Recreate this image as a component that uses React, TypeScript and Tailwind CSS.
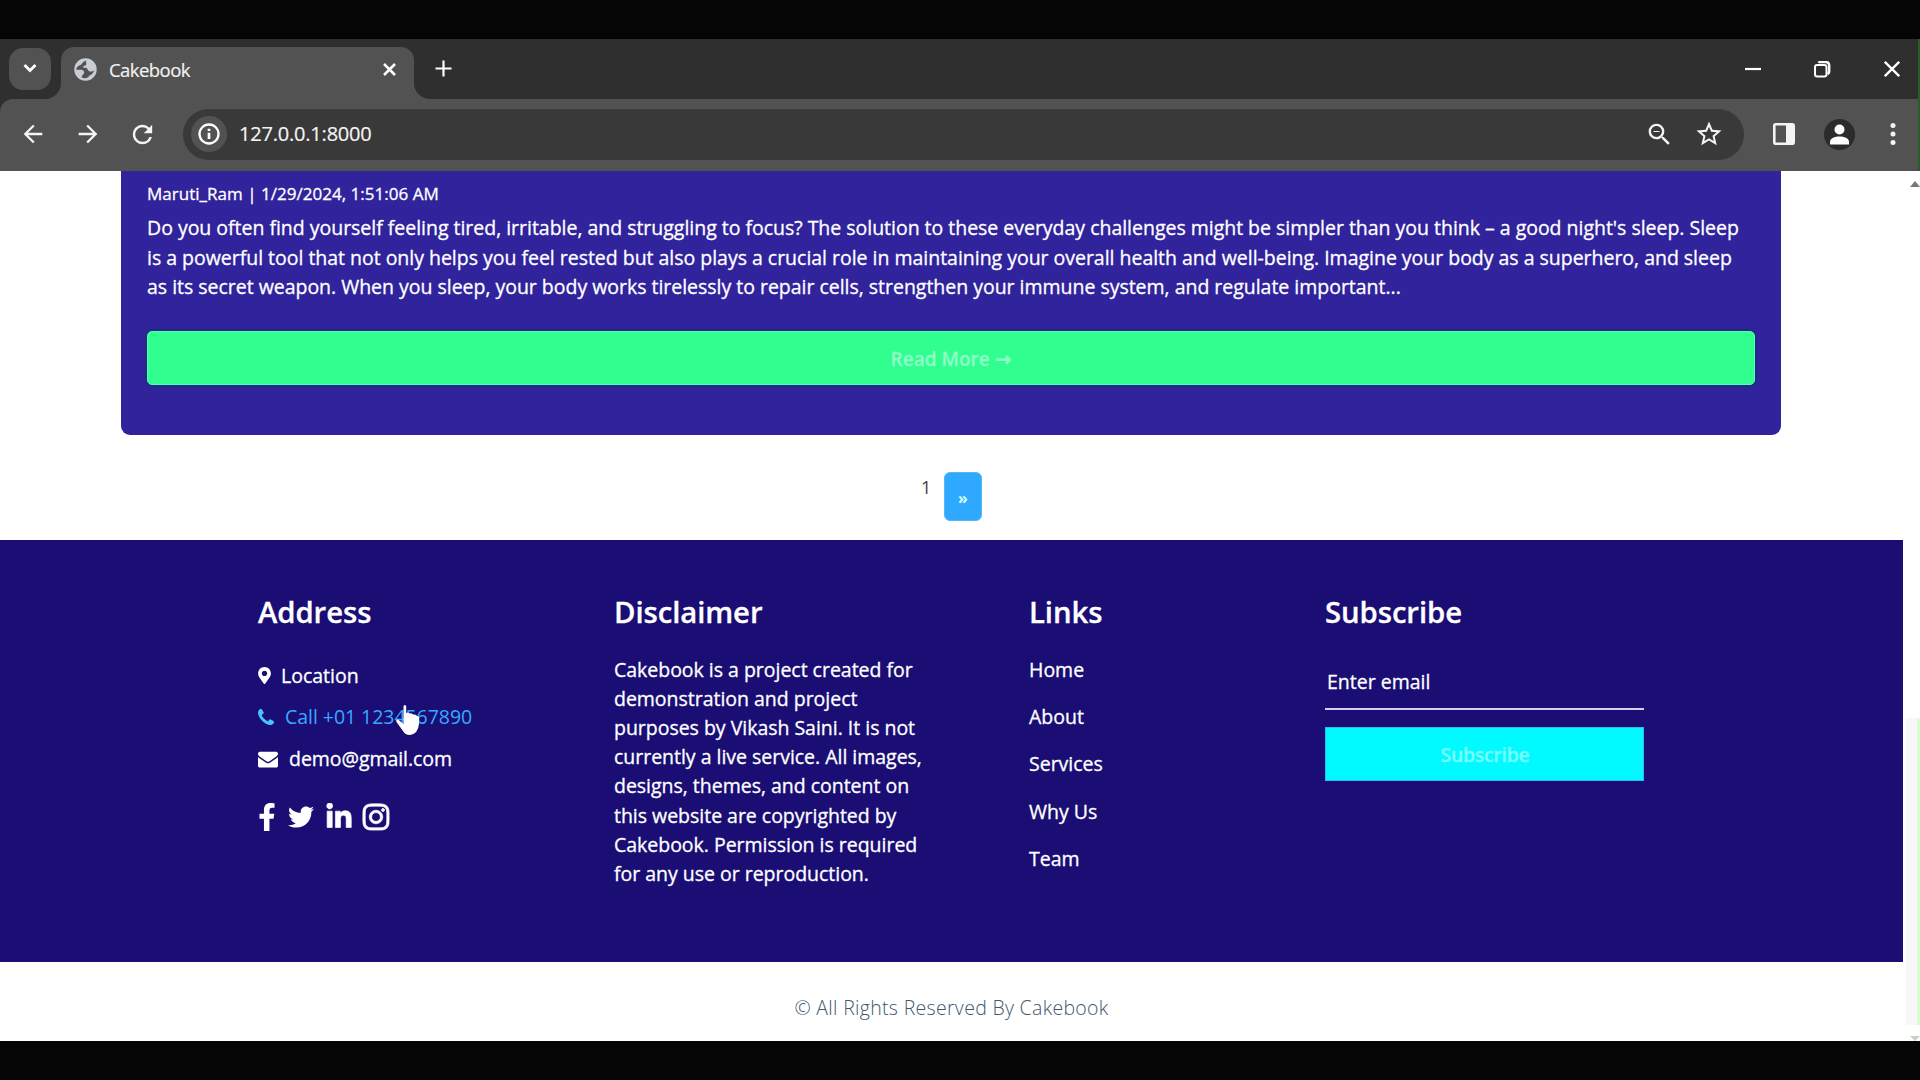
import React from "react";
import { FaMapMarkerAlt, FaFacebookF, FaTwitter, FaLinkedinIn, FaInstagram } from "react-icons/fa";
import { MdArrowBack, MdArrowForward, MdRefresh, MdStarBorder, MdZoomOut } from "react-icons/md";

const PHONE =
  "M1408 1112q0 27-10 70.5t-21 68.5q-21 50-122 106-94 51-186 51-27 0-53-3.5t-57-12.5-47-14.5-55.5-20.5-49.5-18q-98-35-175-83-127-79-264-216t-216-264q-48-77-83-175-3-9-18-49.5t-20.5-55.5-14.5-47-12.5-57-3.5-53q0-92 51-186 56-101 106-122 25-11 68.5-21t70.5-10q14 0 21 3 18 6 53 76 11 19 30 54t35 63.5 31 53.5q3 4 17.5 25t21.5 35.5 7 28.5q0 20-28.5 50t-62 55-62 53-28.5 46q0 9 5 22.5t8.5 20.5 14 24 11.5 19q76 137 174 235t235 174q2 1 19 11.5t24 14 20.5 8.5 22.5 5q18 0 46-28.5t53-62 55-62 50-28.5q14 0 28.5 7t35.5 21.5 25 17.5q25 15 53.5 31t63.5 35 54 30q70 35 76 53 3 7 3 21z";
const ENVELOPE =
  "M1792 710v794q0 66-47 113t-113 47h-1472q-66 0-113-47t-47-113v-794q44 49 101 87 362 246 497 345 57 42 92.5 65.5t94.5 48 110 24.5h2q51 0 110-24.5t94.5-48 92.5-65.5q170-123 498-345 57-39 100-87zm0-294q0 79-49 151t-122 123q-376 261-468 325-10 7-42.5 31t-54 38.5-52 32.5-57.5 27-50 9h-2q-23 0-50-9t-57.5-27-52-32.5-54-38.5-42.5-31q-91-64-262-182.5t-205-142.5q-62-42-117-115.5t-55-136.5q0-78 41.5-130t118.5-52h1472q65 0 112.5 47t47.5 113z";

function TabStrip() {
  return (
    <div className="flex h-[60px] shrink-0 bg-[#2f2f2f] pl-[9px]">
      <div className="mt-[9px] flex size-[42px] items-center justify-center rounded-[14px] bg-[#525252]">
        <svg width="14" height="10" viewBox="0 0 14 10" fill="none" stroke="#fff" strokeWidth="2.8">
          <path d="M1.5 1 7 6.5 12.5 1" />
        </svg>
      </div>
      <div className="relative ml-[10px] mt-2 flex h-[52px] w-[353px] items-center rounded-t-[13px] bg-[#525252] pb-2 pl-[13px] pr-[18px]">
        <svg className="absolute -left-4 bottom-0" width="16" height="16" fill="#525252">
          <path d="M16 0V16H0A16 16 0 0 0 16 0Z" />
        </svg>
        <svg className="absolute -right-4 bottom-0" width="16" height="16" fill="#525252">
          <path d="M0 0V16H16A16 16 0 0 1 0 0Z" />
        </svg>
        <svg width="23" height="23" viewBox="0 0 23 23" className="shrink-0">
          <circle cx="11.5" cy="11.5" r="11.2" fill="#c8ccd3" />
          <path
            d="M12.300 2.500C8.500 3.500 9 5.800 6 7.200C3.500 8.300 2.300 9.500 2.300 11.800H6.500C9.500 11.800 9.800 13.200 10.300 14.800C9.800 16.500 8 17 7.500 19.300C11 21.300 14.500 20 15.300 17.500C17.500 17 18.500 15.800 20.700 12C18.500 13.800 17 13.700 15.200 13.300C13.500 12.800 14 10.500 12 9.800H9.300C8.800 8 10.300 7.500 12 7.300C13 6 11.300 4.800 12.300 2.500Z"
            fill="#525252"
          />
        </svg>
        <span className="ml-[12px] mt-[1px] flex-1 text-[18.500px] leading-6 tracking-[-0.550px] text-[#f1f1f1] [-webkit-text-stroke:0.200px]">Cakebook</span>
        <svg width="13" height="13" viewBox="0 0 13 13" stroke="#fff" strokeWidth="2.5">
          <path d="M1 1 12 12M12 1 1 12" />
        </svg>
      </div>
      <svg className="ml-[21px] mt-[21px]" width="17" height="17" viewBox="0 0 17 17" stroke="#fff" strokeWidth="2.2">
        <path d="M8.5 0.5V16.5M0.5 8.5H16.5" />
      </svg>
      <div className="ml-auto mr-[20px] flex h-[60px] items-center">
        <svg className="mr-[53px]" width="16" height="16" stroke="#fff" strokeWidth="2.2">
          <path d="M0 8H16" />
        </svg>
        <svg className="mr-[53px]" width="17" height="17" viewBox="0 0 17 17" fill="none" stroke="#fff" strokeWidth="2">
          <rect x="1" y="4" width="11.5" height="11.5" rx="2.2" />
          <path d="M4.500 1.800Q5 1 6.500 1H11.500Q15.200 1 15.200 4.700V10Q15.200 12.500 13.500 13" strokeWidth="2.400" />
        </svg>
        <svg width="16" height="16" viewBox="0 0 16 16" stroke="#fff" strokeWidth="2.3">
          <path d="M0.800 0.800 15.200 15.200M15.200 0.800 0.800 15.200" />
        </svg>
      </div>
    </div>
  );
}

function Toolbar() {
  return (
    <div className="h-[72px] shrink-0 bg-[#2f2f2f]">
      <div className="flex h-full items-center rounded-tl-[13px] bg-[#525252] pb-[2px] pl-[19px] text-[#f4f4f4]">
        <MdArrowBack size={28} />
        <MdArrowForward size={28} className="ml-[27px]" />
        <MdRefresh size={29} className="ml-[26px]" />
        <div className="ml-[26px] flex h-[51px] w-[1561px] items-center rounded-full bg-[#393939] pl-2 pr-[20px]">
          <div className="flex size-9 items-center justify-center rounded-full bg-[#525252]">
            <svg width="22" height="22" viewBox="0 0 22 22" fill="none" stroke="#fff" strokeWidth="2.3">
              <circle cx="11" cy="11" r="9.5" />
              <path d="M11 9.700V16M11 5.800V8" strokeWidth="2.700" />
            </svg>
          </div>
          <span className="ml-[12px] flex-1 text-[20px] leading-7 tracking-[-0.200px] text-[#f4f4f4] [-webkit-text-stroke:0.200px]">127.0.0.1:8000</span>
          <MdZoomOut size={29} />
          <MdStarBorder size={30} className="ml-[20px]" />
        </div>
        <svg className="ml-[29px]" width="22" height="22" viewBox="0 0 22 22">
          <rect x="1.300" y="1.300" width="19.400" height="19.400" rx="1.500" fill="none" stroke="#f4f4f4" strokeWidth="2.600" />
          <rect x="13" y="1" width="8" height="20" fill="#f4f4f4" />
        </svg>
        <svg className="ml-[29px]" width="31" height="31" viewBox="0 0 31 31">
          <circle cx="15.500" cy="15.500" r="15.500" fill="#2b2b2b" />
          <circle cx="15.500" cy="10.500" r="5" fill="#fff" />
          <path d="M6 25.500V23C6 19 11 17.500 15.500 17.500S25 19 25 23V25.500Z" fill="#fff" />
        </svg>
        <svg className="ml-[35px]" width="6" height="24" viewBox="0 0 6 24" fill="#f4f4f4">
          <circle cx="3" cy="3.500" r="2.500" />
          <circle cx="3" cy="12" r="2.500" />
          <circle cx="3" cy="20.500" r="2.500" />
        </svg>
      </div>
    </div>
  );
}

function PostCard() {
  return (
    <article className="ml-[121px] h-[264px] w-[1660px] rounded-b-[9px] bg-[#31239b] px-[26px] text-white [-webkit-text-stroke:0.300px]">
      <p className="pt-[10px] text-[17px] leading-[26px] tracking-[0.020px]">Maruti_Ram | 1/29/2024, 1:51:06 AM</p>
      <div className="mt-[6.400px] whitespace-nowrap text-[19.500px] leading-[29.200px] tracking-[-0.021px]">
        <p>Do you often find yourself feeling tired, irritable, and struggling to focus? The solution to these everyday challenges might be simpler than you think – a good night's sleep. Sleep</p>
        <p>is a powerful tool that not only helps you feel rested but also plays a crucial role in maintaining your overall health and well-being. Imagine your body as a superhero, and sleep</p>
        <p>as its secret weapon. When you sleep, your body works tirelessly to repair cells, strengthen your immune system, and regulate important...</p>
      </div>
      <button className="mt-[30px] flex h-[54px] w-[1608px] items-center justify-center rounded-[5px] border border-[#5df8bd] bg-[#30ff8f] pt-[3px] text-[19px] font-semibold text-[#8dffc6] shadow-[0_0_3px_1px_#0b3a6a]">
        <span>Read More <span className="font-['DejaVu_Sans'] text-[20px] leading-none">→</span></span>
      </button>
    </article>
  );
}

const LINKS = ["Home", "About", "Services", "Why Us", "Team"];
const HEADING = "relative top-[1px] text-[29.300px] font-semibold leading-[35px] tracking-[-0.080px]";

function Footer() {
  return (
    <footer className="flex h-[422px] w-[1903px] bg-[#1a0e74] pl-[258px] pt-[54px] text-[19.500px] leading-[29.200px] text-white [-webkit-text-stroke:0.300px]">
      <section className="relative w-[356px] shrink-0">
        <h2 className={HEADING}>Address</h2>
        <div className="mt-[32px] flex items-center gap-[11px]">
          <FaMapMarkerAlt size={17} className="-mr-[1px] w-[13px]" />
          <span>Location</span>
        </div>
        <div className="mt-[12px] flex items-center gap-[11px] text-[#38a9ff] [-webkit-text-stroke:0px]">
          <svg width="16" height="16" viewBox="0 0 1408 1408" fill="#45c4ff"><path d={PHONE} /></svg>
          <span className="tracking-[-0.050px]">Call +01 1234567890</span>
        </div>
        <div className="mt-[13px] flex items-center gap-[11px]">
          <svg width="20" height="20" viewBox="0 0 1792 1792" fill="#fff"><path d={ENVELOPE} /></svg>
          <span className="tracking-[-0.050px]">demo@gmail.com</span>
        </div>
        <div className="mt-[28px] flex items-center">
          <FaFacebookF size={28} className="w-[18px]" />
          <FaTwitter size={26} className="ml-[12px]" />
          <FaLinkedinIn size={28} className="ml-[11px] stroke-[12px]" />
          <FaInstagram size={30} className="ml-[8px] stroke-[12px]" />
        </div>
        <svg className="absolute left-[136px] top-[110px]" width="26" height="32" viewBox="0 0 26 32" fill="#fff">
          <path d="M9.500 2.500Q9.500 1 10.800 1T12.200 2.500V9Q14 7.800 15.600 9.600Q17.600 8.800 18.900 10.600Q21 10 22.200 11.200L25 13V20Q24 30 16 31Q11 31 9 27L2.500 18Q1.500 15.500 4 15.500L9.500 20Z" />
        </svg>
      </section>
      <section className="w-[415px] shrink-0">
        <h2 className={HEADING}>Disclaimer</h2>
        <div className="mt-[25.500px] whitespace-nowrap tracking-[-0.020px]">
          <p>Cakebook is a project created for</p>
          <p>demonstration and project</p>
          <p>purposes by Vikash Saini. It is not</p>
          <p>currently a live service. All images,</p>
          <p>designs, themes, and content on</p>
          <p>this website are copyrighted by</p>
          <p>Cakebook. Permission is required</p>
          <p>for any use or reproduction.</p>
        </div>
      </section>
      <section className="w-[296px] shrink-0">
        <h2 className={HEADING}>Links</h2>
        <ul className="mt-[25.700px] flex flex-col gap-[18.200px]">
          {LINKS.map((l) => <li key={l}>{l}</li>)}
        </ul>
      </section>
      <section className="w-[319px] shrink-0">
        <h2 className={HEADING}>Subscribe</h2>
        <div className="mt-[28px] flex h-[53px] items-center border-b-2 border-[#d6d0f0] pb-[1px] pl-[2px]">
          <span className="-mt-[1px]">Enter email</span>
        </div>
        <button className="mt-[17px] flex h-[54px] w-full items-center justify-center border border-[#2fb8f8] bg-[#00faff] pl-[1px] pt-[2px] font-semibold tracking-[-0.300px] text-[#78ffff]">
          Subscribe
        </button>
      </section>
    </footer>
  );
}

export default function App() {
  return (
    <div className="relative flex h-[1080px] w-[1920px] flex-col overflow-hidden bg-[#050505] pt-[39px] font-['Open_Sans',sans-serif]">
      <TabStrip />
      <Toolbar />
      <main className="flex h-[870px] shrink-0 bg-white">
        <div className="w-[1903px]">
          <PostCard />
          <div className="ml-[921px] flex h-[105px] pt-[37px]">
            <span className="mt-[2px] w-[23px] text-[18px] leading-[27px] text-[#4a4038]">1</span>
            <span className="flex h-[49px] w-[38px] items-center justify-center rounded-[6px] border border-[#55b8f4] bg-[#2fa8ff] pt-[3px] text-[16px] font-bold text-[#d2ffff]">»</span>
          </div>
          <Footer />
          <p className="w-[1903px] pt-[31px] text-center text-[19.500px] font-light leading-[29px] tracking-[0.310px] text-[#42566e]">© All Rights Reserved By Cakebook</p>
        </div>
        <div className="flex w-[17px] flex-col pl-[3px]">
          <svg className="ml-[4px] mt-[10px]" width="10" height="6" fill="#777"><path d="M0 6 5 0 10 6Z" /></svg>
          <div className="mt-[531px] h-[307px] border-r-[3px] border-[#d8ffd0] bg-[#f8f8f8]" />
          <svg className="ml-[4px] mt-[11px]" width="10" height="5" fill="#c2d4c0"><path d="M0 0H10L5 5Z" /></svg>
        </div>
      </main>
      <div className="absolute left-[1918px] top-[39px] h-[132px] w-[2px] bg-[#285c28]" />
    </div>
  );
}
